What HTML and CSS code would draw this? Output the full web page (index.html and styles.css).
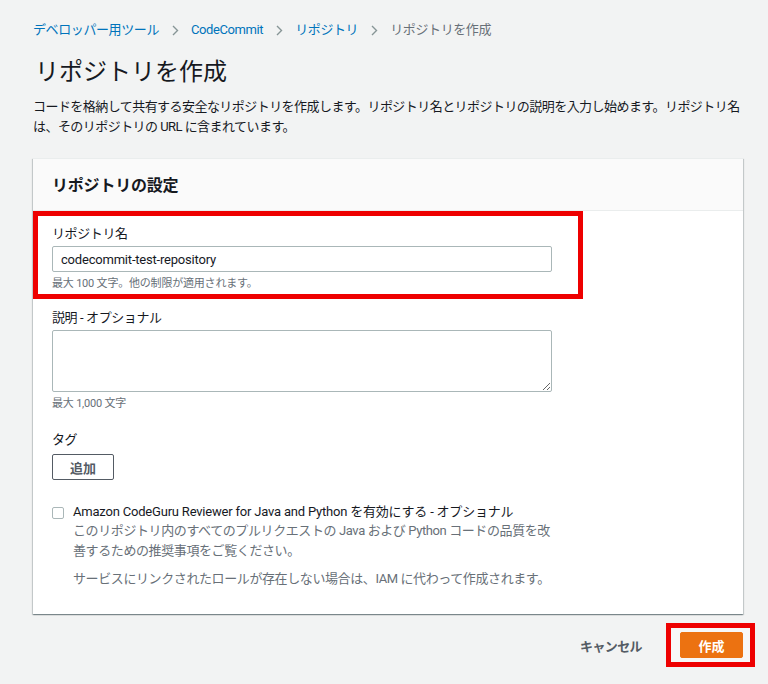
FILE: index.html
```html
<!DOCTYPE html>
<html lang="ja">
<head>
<meta charset="utf-8">
<title>リポジトリを作成</title>
<link rel="stylesheet" href="styles.css">
</head>
<body>
<div class="page">
  <nav class="breadcrumb">
    <a class="crumb-link" href="#">デベロッパー用ツール</a>
    <svg class="chev" width="7" height="11" viewBox="0 0 7 11"><path d="M1 1l4.5 4.5L1 10" fill="none" stroke="#879596" stroke-width="1.4"/></svg>
    <a class="crumb-link" href="#">CodeCommit</a>
    <svg class="chev" width="7" height="11" viewBox="0 0 7 11"><path d="M1 1l4.5 4.5L1 10" fill="none" stroke="#879596" stroke-width="1.4"/></svg>
    <a class="crumb-link" href="#">リポジトリ</a>
    <svg class="chev" width="7" height="11" viewBox="0 0 7 11"><path d="M1 1l4.5 4.5L1 10" fill="none" stroke="#879596" stroke-width="1.4"/></svg>
    <span class="crumb-current">リポジトリを作成</span>
  </nav>

  <h1 class="title">リポジトリを作成</h1>
  <p class="intro">コードを格納して共有する安全なリポジトリを作成します。リポジトリ名とリポジトリの説明を入力し始めます。リポジトリ名は、そのリポジトリの URL に含まれています。</p>

  <section class="card">
    <div class="card-header">
      <h2 class="card-title">リポジトリの設定</h2>
    </div>
    <div class="card-body">
      <div class="field field-name">
        <div class="highlight-box"></div>
        <label class="label">リポジトリ名</label>
        <input class="text-input" type="text" value="codecommit-test-repository">
        <div class="hint">最大 100 文字。他の制限が適用されます。</div>
      </div>

      <div class="field field-desc">
        <label class="label">説明 - オプショナル</label>
        <textarea class="text-area"></textarea>
        <div class="hint">最大 1,000 文字</div>
      </div>

      <div class="field field-tag">
        <label class="label">タグ</label>
        <button class="btn-normal">追加</button>
      </div>

      <div class="check-row">
        <span class="checkbox"></span>
        <div class="check-content">
          <div class="check-label">Amazon CodeGuru Reviewer for Java and Python を有効にする - オプショナル</div>
          <p class="check-desc">このリポジトリ内のすべてのプルリクエストの Java および Python コードの品質を改善するための推奨事項をご覧ください。</p>
          <p class="check-desc check-desc-2">サービスにリンクされたロールが存在しない場合は、IAM に代わって作成されます。</p>
        </div>
      </div>
    </div>
  </section>

  <div class="actions">
    <button class="btn-link">キャンセル</button>
    <div class="primary-wrap">
      <button class="btn-primary">作成</button>
    </div>
  </div>
</div>
</body>
</html>
```

FILE: styles.css
```css
* { box-sizing: border-box; }

html, body {
  margin: 0;
  padding: 0;
  background: #f2f3f3;
}

body {
  font-family: Roboto, "Noto Sans CJK JP", sans-serif;
  font-size: 13px;
  color: #16191f;
  letter-spacing: -0.4px;
}

.page {
  padding: 21px 25px 17px 33px;
}

.breadcrumb {
  display: flex;
  align-items: center;
  height: 18px;
  line-height: 18px;
  font-size: 13px;
}

.crumb-link {
  color: #0073bb;
  text-decoration: none;
}

.chev {
  margin: 0 12px 0 13px;
  display: block;
}

.crumb-current {
  color: #687078;
}

.title {
  margin: 18px 0 0 2px;
  font-size: 24px;
  line-height: 30px;
  font-weight: 400;
  letter-spacing: 0;
  color: #16191f;
}

.intro {
  margin: 10px 0 0;
  line-height: 20px;
  font-size: 13px;
  letter-spacing: -0.55px;
  color: #16191f;
}

.card {
  margin-top: 21px;
  background: #ffffff;
  border-top: 1px solid #eaeded;
  box-shadow: 0 1px 1px 0 rgba(0, 28, 36, 0.3), 1px 1px 1px 0 rgba(0, 28, 36, 0.15), -1px 1px 1px 0 rgba(0, 28, 36, 0.15);
}

.card-header {
  height: 52px;
  background: #fafafa;
  border-bottom: 1px solid #eaeded;
  padding: 0 19px;
  display: flex;
  align-items: center;
}

.card-title {
  margin: -2px 0 0;
  font-size: 16px;
  font-weight: 700;
  letter-spacing: -0.2px;
}

.card-body {
  padding: 12px 19px 25px;
}

.field {
  position: relative;
  width: 500px;
}

.label {
  display: block;
  padding-top: 2px;
  line-height: 18px;
  font-size: 13px;
  color: #16191f;
}

.text-input {
  display: block;
  width: 500px;
  height: 26px;
  margin-top: 3px;
  padding: 0 8px;
  border: 1px solid #aab7b8;
  border-radius: 2px;
  background: #fff;
  font-family: Roboto, "Noto Sans CJK JP", sans-serif;
  font-size: 13px;
  letter-spacing: -0.2px;
  color: #16191f;
  outline: none;
}

.text-area {
  display: block;
  width: 500px;
  height: 62px;
  margin-top: 3px;
  padding: 4px 8px;
  border: 1px solid #aab7b8;
  border-radius: 2px;
  background: #fff;
  font-family: Roboto, "Noto Sans CJK JP", sans-serif;
  font-size: 13px;
  outline: none;
}

.hint {
  margin-top: 3px;
  padding-top: 1px;
  line-height: 16px;
  font-size: 11px;
  letter-spacing: -0.2px;
  color: #687078;
}

.field-desc { margin-top: 15px; }
.field-tag { margin-top: 17px; }

.btn-normal {
  display: block;
  margin-top: 5px;
  width: 62px;
  height: 26px;
  padding: 0;
  border: 1px solid #545b64;
  border-radius: 2px;
  background: #fff;
  color: #545b64;
  font-family: Roboto, "Noto Sans CJK JP", sans-serif;
  font-size: 13px;
  font-weight: 700;
  letter-spacing: 0;
}

.highlight-box {
  position: absolute;
  left: -19px;
  top: -12px;
  width: 550px;
  height: 88px;
  border: 5px solid #ee0000;
  pointer-events: none;
}

.check-row {
  margin-top: 23px;
  display: flex;
  align-items: flex-start;
}

.checkbox {
  flex: none;
  width: 12px;
  height: 12px;
  margin-top: 4px;
  border: 1px solid #aab7b8;
  border-radius: 2px;
  background: #fff;
}

.check-content {
  margin-left: 9px;
  width: 480px;
}

.check-label {
  line-height: 18px;
  letter-spacing: -0.2px;
  color: #16191f;
  white-space: nowrap;
}

.check-desc {
  margin: 0;
  line-height: 20px;
  color: #687078;
}

.check-desc-2 {
  margin-top: 8px;
  white-space: nowrap;
}

.actions {
  display: flex;
  justify-content: flex-end;
  align-items: center;
  margin-top: 9px;
  margin-right: -12px;
}

.btn-link {
  border: none;
  background: transparent;
  padding: 0;
  margin-right: 24px;
  font-family: Roboto, "Noto Sans CJK JP", sans-serif;
  font-size: 13px;
  font-weight: 700;
  color: #545b64;
  letter-spacing: -0.6px;
}

.primary-wrap {
  border: 5px solid #ee0000;
  background: #f7f7f7;
  padding: 4px 7px 4px 9px;
}

.btn-primary {
  display: block;
  width: 63px;
  height: 26px;
  padding: 0;
  border: 1px solid #ec7211;
  border-radius: 2px;
  background: #ec7211;
  color: #fff;
  font-family: Roboto, "Noto Sans CJK JP", sans-serif;
  font-size: 13px;
  font-weight: 700;
  letter-spacing: 0;
}
```
